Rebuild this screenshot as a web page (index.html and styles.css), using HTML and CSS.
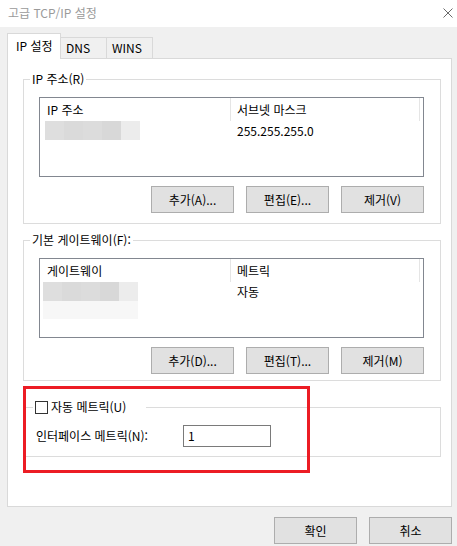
FILE: index.html
```html
<!DOCTYPE html>
<html lang="ko">
<head>
<meta charset="utf-8">
<title>고급 TCP/IP 설정</title>
<link rel="stylesheet" href="styles.css">
</head>
<body>
<div class="window">
  <div class="titlebar">
    <span class="title">고급 TCP/IP 설정</span>
    <svg class="close" width="10" height="10" viewBox="0 0 10 10"><path d="M0.5 0.5 L9.5 9.5 M9.5 0.5 L0.5 9.5" stroke="#6a6a6a" stroke-width="1" fill="none"/></svg>
  </div>
  <div class="tabstrip">
    <div class="tab active">IP 설정</div>
    <div class="tab">DNS</div>
    <div class="tab">WINS</div>
  </div>
  <div class="panel">
    <fieldset class="group">
      <legend class="legend">IP 주소(R)</legend>
      <div class="listview">
        <div class="lv-header">
          <div class="col c1">IP 주소</div>
          <div class="col c2">서브넷 마스크</div>
        </div>
        <div class="lv-row">
          <div class="col c1"><span class="blur"></span></div>
          <div class="col c2">255.255.255.0</div>
        </div>
      </div>
      <div class="btnrow">
        <button class="btn">추가(A)...</button>
        <button class="btn">편집(E)...</button>
        <button class="btn">제거(V)</button>
      </div>
    </fieldset>

    <fieldset class="group second">
      <legend class="legend">기본 게이트웨이(F):</legend>
      <div class="listview">
        <div class="lv-header">
          <div class="col c1">게이트웨이</div>
          <div class="col c2">메트릭</div>
        </div>
        <div class="lv-row">
          <div class="col c1"><span class="blur gw"></span></div>
          <div class="col c2">자동</div>
        </div>
        <div class="lv-row faint">
          <div class="col c1"><span class="blur faintblur"></span></div>
        </div>
      </div>
      <div class="btnrow">
        <button class="btn">추가(D)...</button>
        <button class="btn">편집(T)...</button>
        <button class="btn">제거(M)</button>
      </div>
    </fieldset>

    <fieldset class="group metric">
      <legend class="legend check-legend"><span class="checkbox"></span>자동 메트릭(U)</legend>
      <div class="metric-row">
        <span class="metric-label">인터페이스 메트릭(N):</span>
        <div class="textbox">1</div>
      </div>
    </fieldset>

    <div class="highlight"></div>
  </div>
  <div class="footer">
    <button class="btn">확인</button>
    <button class="btn">취소</button>
  </div>
</div>
</body>
</html>
```

FILE: styles.css
```css
* { box-sizing: border-box; }
html, body { margin: 0; padding: 0; }
body {
  width: 457px;
  height: 546px;
  overflow: hidden;
  background: #f0f0f0;
  font-family: "Noto Sans CJK KR", "Noto Sans", sans-serif;
  font-size: 12px;
  color: #000;
}
.window { width: 457px; height: 546px; }

.titlebar {
  height: 27px;
  background: #fff;
  display: flex;
  align-items: center;
  justify-content: space-between;
  padding: 0 4px 2px 8px;
}
.title { color: #9a9a9a; font-size: 12px; line-height: 16px; }
.close { display: block; }

.tabstrip {
  height: 31px;
  display: flex;
  align-items: flex-end;
  padding-left: 7px;
}
.tab {
  height: 21px;
  width: 46px;
  border: 1px solid #d9d9d9;
  border-bottom: none;
  background: #f0f0f0;
  line-height: 20px;
  padding-left: 5px;
  margin-left: -1px;
}
.tab.active {
  height: 26px;
  width: 54px;
  margin-left: 0;
  margin-bottom: -1px;
  background: #fff;
  position: relative;
  z-index: 2;
  padding-left: 8px;
  line-height: 24px;
}
.tab + .tab { width: 47px; }

.panel {
  position: relative;
  margin: 0 5px 0 7px;
  height: 449px;
  background: #fff;
  border: 1px solid #d9d9d9;
  padding: 12px 10px 0 15px;
}

.group {
  margin: 0;
  padding: 10px 16px 10px 15px;
  border: 1px solid #dcdcdc;
  min-width: 0;
}
.group.second { margin-top: 8px; padding-bottom: 6px; }
.legend {
  padding: 0 2px;
  margin-left: -9px;
  line-height: 16px;
}

.listview {
  height: 80px;
  border: 1px solid #828790;
  background: #fff;
}
.lv-header, .lv-row { display: flex; }
.lv-header { height: 23px; line-height: 23px; }
.lv-row { height: 19px; line-height: 19px; }
.col { padding-left: 7px; white-space: nowrap; }
.c1 { width: 190px; padding-left: 7px; }
.c2 { width: 190px; }
.lv-header .c2 { border-left: 1px solid #e5e5e5; border-right: 1px solid #e5e5e5; padding-left: 6px; }
.lv-row .c2 { padding-left: 7px; }
.lv-row .c1 { padding-left: 5px; }

.blur {
  display: block;
  width: 95px;
  height: 19px;
  background: linear-gradient(to right,
    #dedede 0 19px, #dadada 19px 38px, #dcdcdc 38px 57px, #d8d8d8 57px 76px, #ececec 76px 95px);
}
.blur.gw { margin-left: -2px; height: 19px; }
.blur.faintblur {
  margin-left: -2px;
  height: 18px;
  background: linear-gradient(to right, #f7f7f7 0 95px);
}

.btnrow {
  display: flex;
  justify-content: flex-end;
  gap: 12px;
  margin-top: 9px;
}
.btn {
  width: 83px;
  height: 27px;
  background: #e1e1e1;
  border: 1px solid #adadad;
  font-family: "Noto Sans CJK KR", "Noto Sans", sans-serif;
  font-size: 12px;
  color: #000;
  padding: 0;
  line-height: 25px;
  border-radius: 0;
}

.group.metric {
  margin-top: 18px;
  padding: 10px 16px 9px 0;
}
.check-legend {
  margin-left: 9px;
  padding: 0 20px 0 2px;
  display: flex;
  align-items: center;
}
.checkbox {
  width: 13px;
  height: 13px;
  border: 1px solid #333;
  background: #fff;
  margin-right: 3px;
}
.metric-row {
  display: flex;
  align-items: center;
  padding-left: 12px;
}
.metric-label { width: 147px; line-height: 16px; }
.textbox {
  width: 88px;
  height: 22px;
  border: 1px solid #7a7a7a;
  padding-left: 4px;
  line-height: 20px;
}

.highlight {
  position: absolute;
  left: 15px;
  top: 327px;
  width: 287px;
  height: 87px;
  border: 3px solid #ec1c24;
  pointer-events: none;
}

.footer {
  display: flex;
  justify-content: flex-end;
  gap: 12px;
  padding: 10px 5px 0 0;
}
```
